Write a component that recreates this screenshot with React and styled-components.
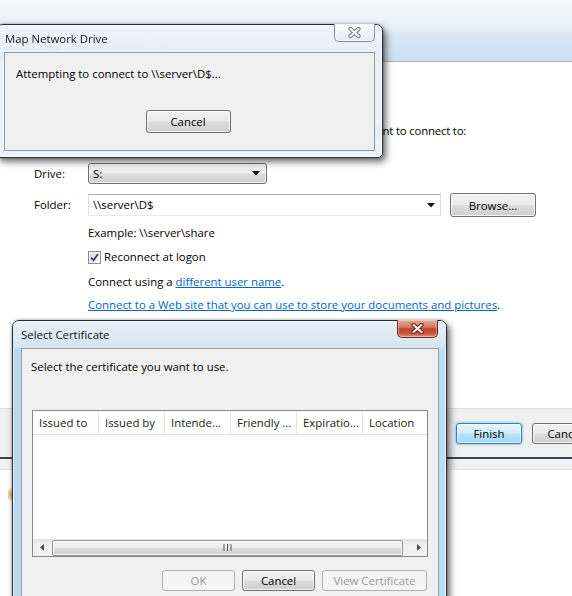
import React from "react";
import styled, { createGlobalStyle, css } from "styled-components";

const uiFont = `"Open Sans", "Noto Sans", "Liberation Sans", sans-serif`;

const GlobalStyle = createGlobalStyle`
  html, body { margin: 0; padding: 0; background: #ffffff; }
  body { overflow: hidden; }
  * { box-sizing: border-box; }
`;

const Desktop = styled.div`
  position: relative;
  width: 572px;
  height: 596px;
  overflow: hidden;
  background: #ffffff;
  font-family: ${uiFont};
  font-size: 11.4px;
  line-height: 16px;
  color: #000;
`;

/* ---------- wizard window in the back ---------- */

const Wizard = styled.div`
  width: 610px;
  height: 596px;
  display: flex;
  flex-direction: column;
`;

const WizardGlassTop = styled.div`
  height: 28px;
  background: linear-gradient(#f4f8fc, #e7eff7);
`;

const WizardHeader = styled.div`
  height: 34px;
  display: flex;
  align-items: center;
  padding-left: 10px;
  gap: 10px;
  background: linear-gradient(#e6eff7 0%, #d6e5f2 35%, #cddff0 100%);
  border-bottom: 1px solid #a7b7c7;
`;

const BackCircle = styled.div`
  width: 24px;
  height: 24px;
  border-radius: 50%;
  background: radial-gradient(circle at 50% 35%, #f4f7fb, #b9c7d6);
  border: 1px solid #8a9bb0;
`;

const WizardIcon = styled.div`
  width: 16px;
  height: 14px;
  border-radius: 2px;
  background: linear-gradient(#c9d6e4, #8fa4bb);
`;

const WizardTitle = styled.span`
  color: #3a4755;
  margin-left: -2px;
`;

const WizardBody = styled.div`
  height: 346px;
  background: #fff;
  padding: 24px 0 0 34px;
  display: flex;
  flex-direction: column;
`;

const Heading = styled.div`
  font-size: 15px;
  line-height: 20px;
  color: #003399;
`;

const Para = styled.div`
  margin-top: ${(p) => p.$gap || 0}px;
  padding-left: ${(p) => (p.$indent ? 54 : 0)}px;
  letter-spacing: ${(p) => (p.$tight ? "-0.2px" : "normal")};
  white-space: nowrap;
`;

const FieldRow = styled.div`
  display: flex;
  align-items: center;
  height: ${(p) => p.$h}px;
  margin-top: ${(p) => p.$gap}px;
`;

const FieldLabel = styled.span`
  width: 54px;
  flex: none;
`;

const DropList = styled.div`
  width: 179px;
  height: 21px;
  display: flex;
  align-items: center;
  justify-content: space-between;
  padding: 0 6px 0 4px;
  border: 1px solid #707070;
  border-radius: 3px;
  background: linear-gradient(#f3f3f3 0%, #ebebeb 48%, #dddddd 52%, #d0d0d0 100%);
  box-shadow: inset 0 0 0 1px rgba(255, 255, 255, 0.7);
`;

const ComboBox = styled.div`
  width: 353px;
  height: 22px;
  display: flex;
  align-items: center;
  justify-content: space-between;
  padding: 0 5px 0 4px;
  background: #fff;
  border: 1px solid #dbdfe6;
  border-top-color: #abadb3;
  border-bottom-color: #e3e9ef;
`;

const Arrow = () => (
  <svg width="8" height="5" viewBox="0 0 8 5">
    <path d="M0 0 H8 L4 4.5 Z" fill="#111" />
  </svg>
);

const Button = styled.button`
  font-family: ${uiFont};
  font-size: 11.4px;
  color: #000;
  width: ${(p) => p.$w}px;
  height: ${(p) => p.$h || 21}px;
  flex: none;
  padding: 0;
  margin-left: ${(p) => p.$ml || 0}px;
  border: 1px solid #707070;
  border-radius: 3px;
  background: linear-gradient(#f2f2f2 0%, #ebebeb 48%, #dddddd 52%, #cfcfcf 100%);
  box-shadow: inset 0 0 0 1px rgba(255, 255, 255, 0.75);
  ${(p) =>
    p.$primary &&
    css`
      border-color: #3c7fb1;
      background: linear-gradient(#e6f6fd 0%, #d0eefb 48%, #b6e3f8 52%, #a6d9f4 100%);
      box-shadow: inset 0 0 0 1px rgba(255, 255, 255, 0.6), 0 0 2px 1px rgba(96, 180, 230, 0.55);
    `}
  ${(p) =>
    p.disabled &&
    css`
      color: #9a9a9a;
      border-color: #adb2b5;
      background: #f4f4f4;
      box-shadow: none;
    `}
`;

const CheckRow = styled.label`
  display: flex;
  align-items: center;
  gap: 3px;
  margin-top: 8px;
  padding-left: 54px;
  height: 16px;
`;

const CheckBox = styled.span`
  width: 13px;
  height: 13px;
  border: 1px solid #8e8f8f;
  background: linear-gradient(135deg, #dcdcdc, #fbfbfb);
  display: flex;
  align-items: center;
  justify-content: center;
  box-shadow: inset 0 0 0 1px #f4f4f4;
`;

const Link = styled.a`
  color: #0066cc;
  text-decoration: underline;
  cursor: pointer;
`;

const WizardFooter = styled.div`
  height: 49px;
  background: #f0f0f0;
  border-top: 1px solid #dfdfdf;
  display: flex;
  justify-content: flex-end;
  align-items: flex-start;
  gap: 10px;
  padding: 14px 12px 0 0;
`;

const LowerWindow = styled.div`
  flex: 1;
  display: flex;
  flex-direction: column;
  border-top: 2px solid #3b4550;
`;

const LowerBand = styled.div`
  height: 11px;
  background: #eff1f3;
  border-bottom: 1px solid #e3e5e8;
`;

const LowerPane = styled.div`
  flex: 1;
  background: #fff;
  padding: 18px 0 0 8px;
`;

const OrangeMark = styled.div`
  width: 9px;
  height: 13px;
  border-radius: 3px;
  background: radial-gradient(circle, #e0a050 0%, #f0c890 60%, #ffffff 100%);
  opacity: 0.85;
`;

/* ---------- floating dialogs ---------- */

const Window = styled.div`
  position: absolute;
  left: ${(p) => p.$x}px;
  top: ${(p) => p.$y}px;
  width: ${(p) => p.$w}px;
  height: ${(p) => p.$h}px;
  display: flex;
  flex-direction: column;
  border: 1px solid #26303c;
  border-radius: 7px 7px 5px 5px;
  box-shadow: inset 0 0 0 1px rgba(255, 255, 255, 0.75), 3px 4px 7px rgba(0, 0, 0, 0.55),
    0 0 3px rgba(0, 0, 0, 0.35);
  background: ${(p) =>
    p.$active
      ? "linear-gradient(90deg, #b4d6ee 0%, #cbe4f4 8%, #d9ebf7 50%, #c6e4f5 92%, #b9def2 100%)"
      : "rgba(234, 240, 247, 0.88)"};
  backdrop-filter: blur(3px);
`;

const TitleBar = styled.div`
  position: relative;
  height: 27px;
  flex: none;
  display: flex;
  align-items: center;
  padding-left: 8px;
  border-radius: 6px 6px 0 0;
  background: ${(p) =>
    p.$active
      ? "linear-gradient(#e9f1f8 0%, #dde9f4 60%, #d5e5f2 100%)"
      : "linear-gradient(rgba(246,249,252,0.55), rgba(232,240,247,0.35))"};
  color: #101418;
`;

const CloseButton = styled.div`
  position: absolute;
  top: -1px;
  right: ${(p) => p.$right}px;
  width: ${(p) => p.$w}px;
  height: 18px;
  display: flex;
  align-items: center;
  justify-content: center;
  border: 1px solid ${(p) => (p.$active ? "#6b2a20" : "#7f90a5")};
  border-top: none;
  border-radius: 0 0 5px 5px;
  background: ${(p) =>
    p.$active
      ? "linear-gradient(#e9a596 0%, #d67a67 42%, #c2432c 52%, #cc5a40 80%, #e08f72 100%)"
      : "linear-gradient(rgba(255,255,255,0.75), rgba(222,231,240,0.7))"};
  box-shadow: inset 0 0 0 1px rgba(255, 255, 255, ${(p) => (p.$active ? 0.35 : 0.8)});
`;

const CloseGlyph = ({ dark }) => (
  <svg width="13" height="11" viewBox="0 0 13 11">
    <path d="M2.5 2 L10.5 9 M10.5 2 L2.5 9" stroke={dark} strokeWidth="4.2" strokeLinecap="round" />
    <path d="M2.5 2 L10.5 9 M10.5 2 L2.5 9" stroke="#ffffff" strokeWidth="2.2" strokeLinecap="round" />
  </svg>
);

const Frame = styled.div`
  flex: 1;
  display: flex;
  padding: 0 ${(p) => p.$r}px ${(p) => p.$b}px ${(p) => p.$l}px;
  min-height: 0;
`;

const Client = styled.div`
  flex: 1;
  display: flex;
  flex-direction: column;
  background: #f0f0f0;
  border: 1px solid #8f9dad;
  min-height: 0;
`;

const ProgressText = styled.div`
  padding: 13px 0 0 11px;
`;

const CenteredActions = styled.div`
  display: flex;
  justify-content: center;
  margin-top: 28px;
  padding-right: 3px;
`;

const Prompt = styled.div`
  padding: 10px 0 0 9px;
`;

const ListView = styled.div`
  margin: 35px 0 0 10px;
  width: 396px;
  height: 147px;
  flex: none;
  display: flex;
  flex-direction: column;
  background: #fff;
  border: 1px solid #828790;
`;

const ListHeader = styled.div`
  display: flex;
  height: 24px;
  flex: none;
  border-bottom: 1px solid #e2e3e5;
  overflow: hidden;
`;

const HeaderCell = styled.div`
  width: 66px;
  flex: none;
  padding: 1px 0 0 6px;
  display: flex;
  align-items: center;
  border-right: 1px solid #e5e5e5;
  color: #1a1a1a;
  white-space: nowrap;
`;

const ListRows = styled.div`
  flex: 1;
`;

const HScroll = styled.div`
  height: 17px;
  flex: none;
  display: flex;
  align-items: center;
  background: linear-gradient(#e4e4e4, #f2f2f2 40%, #f0f0f0);
`;

const ScrollArrow = styled.div`
  width: 17px;
  height: 17px;
  flex: none;
  display: flex;
  align-items: center;
  justify-content: center;
  margin-left: ${(p) => (p.$end ? "auto" : "0")};
`;

const ScrollThumb = styled.div`
  height: 16px;
  margin-left: 2px;
  border: 1px solid #979797;
  border-radius: 2px;
  background: linear-gradient(#f7f7f7 0%, #ececec 48%, #dcdcdc 52%, #d4d4d4 100%);
  box-shadow: inset 0 0 0 1px rgba(255, 255, 255, 0.7);
  display: flex;
  align-items: center;
  justify-content: center;
`;

const Grip = () => (
  <svg width="9" height="7" viewBox="0 0 9 7">
    <path d="M1 0 V7 M4.5 0 V7 M8 0 V7" stroke="#5a5a5a" strokeWidth="1" />
  </svg>
);

const DialogActions = styled.div`
  display: flex;
  justify-content: flex-end;
  gap: 7px;
  margin-top: 13px;
  padding-right: 11px;
`;

const columns = ["Issued to", "Issued by", "Intende...", "Friendly ...", "Expiratio...", "Location"];

export default function App() {
  const thumbWidth = 351;
  return (
    <Desktop>
      <GlobalStyle />

      <Wizard>
        <WizardGlassTop />
        <WizardHeader>
          <BackCircle />
          <WizardIcon />
          <WizardTitle>Map Network Drive</WizardTitle>
        </WizardHeader>

        <WizardBody>
          <Heading>What network folder would you like to map?</Heading>
          <Para $gap={17} $tight>
            Specify the drive letter for the connection and the folder that you want to connect to:
          </Para>

          <FieldRow $h={21} $gap={24}>
            <FieldLabel>Drive:</FieldLabel>
            <DropList>
              <span>S:</span>
              <Arrow />
            </DropList>
          </FieldRow>

          <FieldRow $h={24} $gap={9}>
            <FieldLabel>Folder:</FieldLabel>
            <ComboBox>
              <span>\\server\D$</span>
              <Arrow />
            </ComboBox>
            <Button $w={86} $h={24} $ml={9}>
              Browse...
            </Button>
          </FieldRow>

          <Para $indent $gap={8}>
            Example: \\server\share
          </Para>

          <CheckRow>
            <CheckBox>
              <svg width="9" height="9" viewBox="0 0 9 9">
                <path d="M1 4.5 L3.5 7.3 L8 1" stroke="#2d3f73" strokeWidth="1.7" fill="none" />
              </svg>
            </CheckBox>
            <span>Reconnect at logon</span>
          </CheckRow>

          <Para $indent $gap={9}>
            Connect using a <Link>different user name</Link>.
          </Para>
          <Para $indent $gap={7}>
            <Link>Connect to a Web site that you can use to store your documents and pictures</Link>.
          </Para>
        </WizardBody>

        <WizardFooter>
          <Button $w={66} $primary>
            Finish
          </Button>
          <Button $w={66}>Cancel</Button>
        </WizardFooter>

        <LowerWindow>
          <LowerBand />
          <LowerPane>
            <OrangeMark />
          </LowerPane>
        </LowerWindow>
      </Wizard>

      {/* connection progress dialog */}
      <Window $x={-4} $y={24} $w={387} $h={134}>
        <TitleBar>
          Map Network Drive
          <CloseButton $right={7} $w={41}>
            <CloseGlyph dark="#6d7784" />
          </CloseButton>
        </TitleBar>
        <Frame $l={7} $r={7} $b={6}>
          <Client>
            <ProgressText>Attempting to connect to \\server\D$...</ProgressText>
            <CenteredActions>
              <Button $w={85} $h={23}>
                Cancel
              </Button>
            </CenteredActions>
          </Client>
        </Frame>
      </Window>

      {/* certificate picker */}
      <Window $x={12} $y={320} $w={435} $h={300} $active>
        <TitleBar $active>
          Select Certificate
          <CloseButton $right={8} $w={41} $active>
            <CloseGlyph dark="#5a1d14" />
          </CloseButton>
        </TitleBar>
        <Frame $l={8} $r={7} $b={6}>
          <Client>
            <Prompt>Select the certificate you want to use.</Prompt>
            <ListView>
              <ListHeader>
                {columns.map((c) => (
                  <HeaderCell key={c}>{c}</HeaderCell>
                ))}
              </ListHeader>
              <ListRows />
              <HScroll>
                <ScrollArrow>
                  <svg width="4" height="7" viewBox="0 0 4 7">
                    <path d="M4 0 V7 L0 3.5 Z" fill="#4d4d4d" />
                  </svg>
                </ScrollArrow>
                <ScrollThumb style={{ width: thumbWidth }}>
                  <Grip />
                </ScrollThumb>
                <ScrollArrow $end>
                  <svg width="4" height="7" viewBox="0 0 4 7">
                    <path d="M0 0 V7 L4 3.5 Z" fill="#4d4d4d" />
                  </svg>
                </ScrollArrow>
              </HScroll>
            </ListView>
            <DialogActions>
              <Button $w={73} disabled>
                OK
              </Button>
              <Button $w={73}>Cancel</Button>
              <Button $w={105} disabled>
                View Certificate
              </Button>
            </DialogActions>
          </Client>
        </Frame>
      </Window>
    </Desktop>
  );
}
